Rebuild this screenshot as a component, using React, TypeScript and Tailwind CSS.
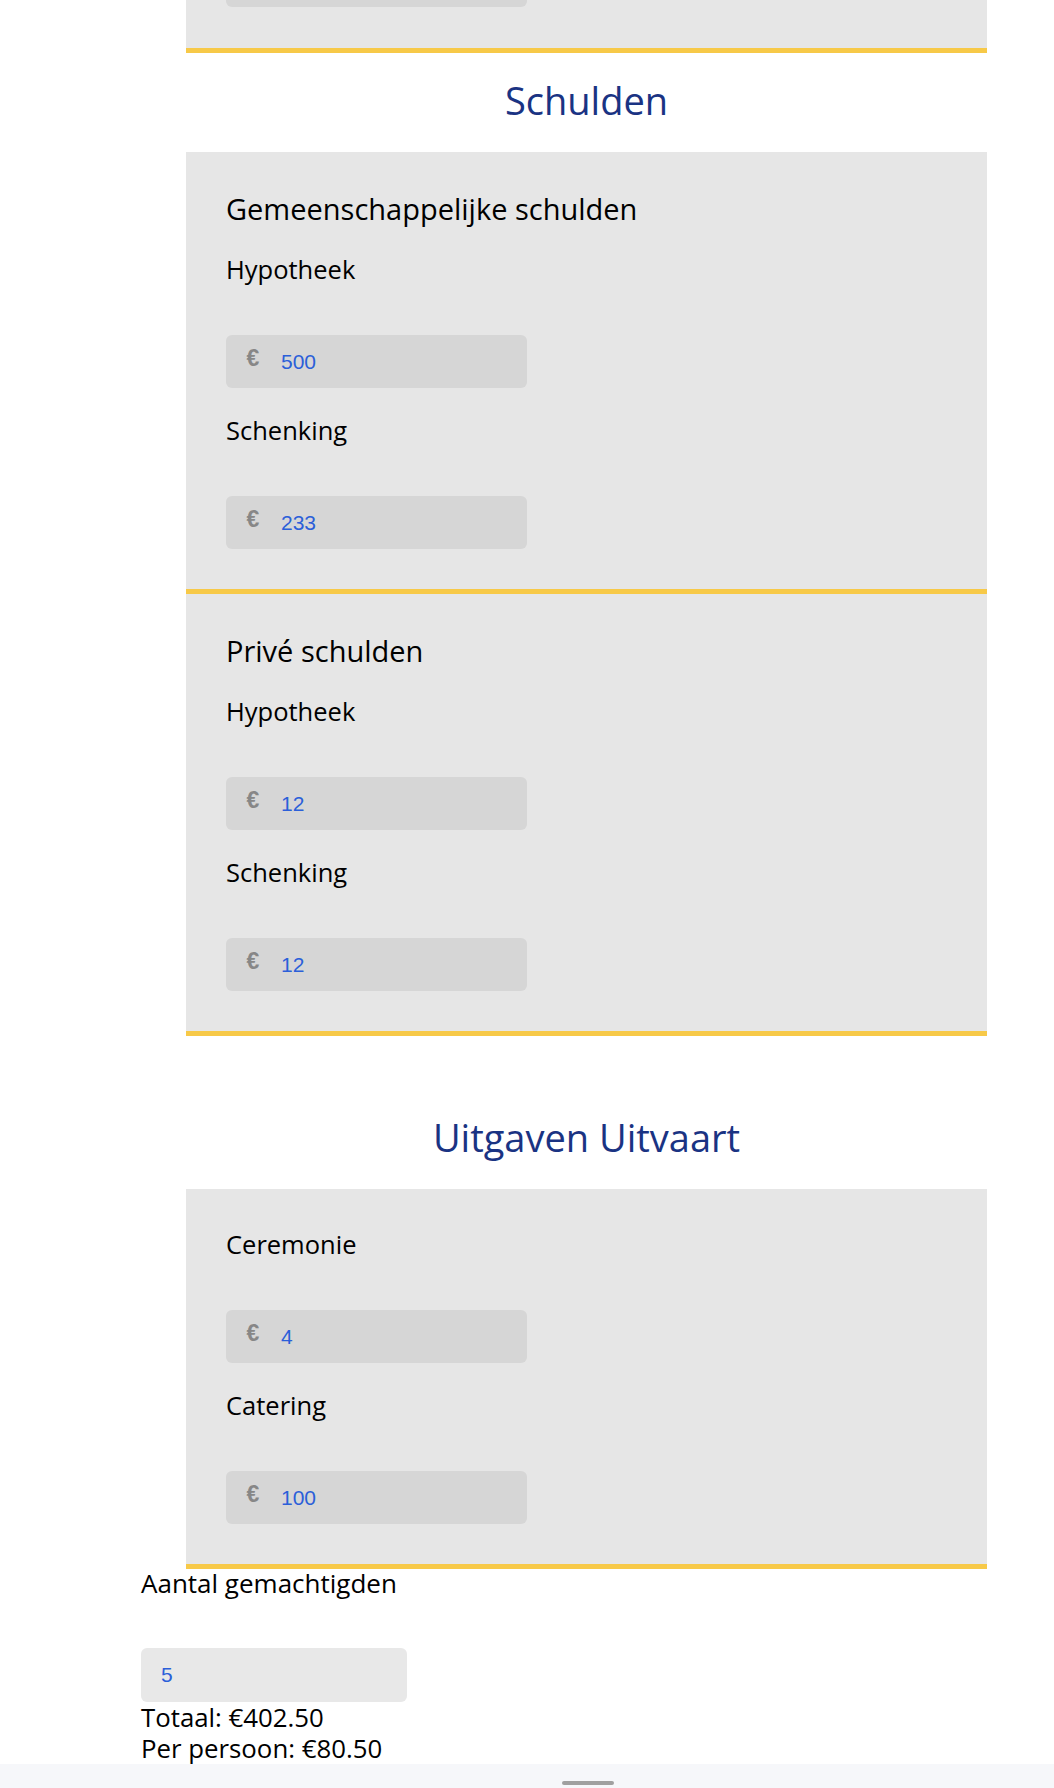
import React from 'react';

type Item = { label: string; value: string };

const sans = "font-['Open_Sans','Noto_Sans',sans-serif]";
const arial = "font-['Liberation_Sans',Arial,sans-serif]";

const MoneyInput: React.FC<{ value: string; className?: string }> = ({ value, className = '' }) => (
  <div className={`flex h-[53px] w-[301px] items-center rounded-[6px] bg-[#d6d6d6] pl-[19px] ${className}`}>
    <span className={`${arial} -mt-[6px] w-[16px] text-center text-[23px] font-bold leading-none text-[#878787]`}>€</span>
    <input
      readOnly
      value={value}
      className={`${arial} ml-[20px] w-[200px] bg-transparent text-[21px] leading-none text-[#2b5fd9] outline-none`}
    />
  </div>
);

const Field: React.FC<{ item: Item }> = ({ item }) => (
  <div>
    <p className="m-0 text-[25.5px] leading-[32px] text-black">{item.label}</p>
    <MoneyInput value={item.value} className="mt-[50px]" />
  </div>
);

const Panel: React.FC<{ title?: string; items: Item[] }> = ({ title, items }) => (
  <section className="flex flex-col gap-[26px] border-b-[5px] border-[#f7c948] bg-[#e6e6e6] px-[40px] pt-[39px] pb-[40px]">
    {title && <h3 className="m-0 text-[29px] leading-[36px] font-normal text-black">{title}</h3>}
    {items.map((it, i) => (
      <Field key={i} item={it} />
    ))}
  </section>
);

const Heading: React.FC<{ children: React.ReactNode; className?: string }> = ({ children, className = '' }) => (
  <h2 className={`m-0 flex h-[99px] items-center justify-center pb-[3px] text-[38px] leading-[1.2] font-normal text-[#1a3383] ${className}`}>
    {children}
  </h2>
);

export default function App() {
  return (
    <div className={`${sans} flex h-[1788px] flex-col overflow-hidden bg-white text-black`}>
      <div className="flex-1">
        <div className="ml-[186px] w-[801px]">
          {/* tail of the previous block, scrolled mostly out of view */}
          <section className="border-b-[5px] border-[#f7c948] bg-[#e6e6e6] px-[40px] pb-[41px]">
            <div className="-mt-[46px] h-[53px] w-[301px] rounded-[6px] bg-[#d6d6d6]" />
          </section>

          <Heading>Schulden</Heading>
          <Panel
            title="Gemeenschappelijke schulden"
            items={[
              { label: 'Hypotheek', value: '500' },
              { label: 'Schenking', value: '233' },
            ]}
          />
          <Panel
            title="Privé schulden"
            items={[
              { label: 'Hypotheek', value: '12' },
              { label: 'Schenking', value: '12' },
            ]}
          />

          <Heading className="mt-[54px]">Uitgaven Uitvaart</Heading>
          <Panel
            items={[
              { label: 'Ceremonie', value: '4' },
              { label: 'Catering', value: '100' },
            ]}
          />
        </div>

        {/* totals */}
        <div className="ml-[141px]">
          <p className="m-0 text-[26px] leading-[28px]">Aantal gemachtigden</p>
          <div className="mt-[51px] flex h-[54px] w-[266px] items-center rounded-[6px] bg-[#e8e8e8] pl-[20px]">
            <input
              readOnly
              value="5"
              className={`${arial} w-[200px] bg-transparent text-[21px] leading-none text-[#2b5fd9] outline-none`}
            />
          </div>
          <div className="text-[25.8px] leading-[31px]">
            <p className="m-0">Totaal: €402.50</p>
            <p className="m-0">Per persoon: €80.50</p>
          </div>
        </div>
      </div>

      {/* home bar */}
      <div className="flex h-[25px] shrink-0 items-end bg-[#f6f7fa] pb-[4px]">
        <div className="ml-[562px] h-[4px] w-[52px] rounded-full bg-[#a0a0a0]" />
      </div>
    </div>
  );
}
